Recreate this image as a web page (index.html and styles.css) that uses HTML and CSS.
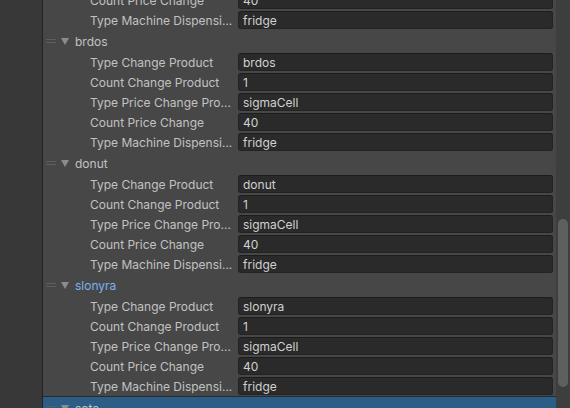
FILE: index.html
```html
<!DOCTYPE html>
<html>
<head>
<meta charset="utf-8">
<link rel="stylesheet" href="styles.css">
</head>
<body>
<div class="window">
  <div class="side"></div>
  <div class="main">
    <div class="list">
      <div class="row"><span class="label">Count Price Change</span><span class="field">40</span></div>
      <div class="row"><span class="label">Type Machine Dispensi...</span><span class="field">fridge</span></div>

      <div class="head"><span class="handle"></span><span class="tri"></span><span class="name">brdos</span></div>
      <div class="row"><span class="label">Type Change Product</span><span class="field">brdos</span></div>
      <div class="row"><span class="label">Count Change Product</span><span class="field">1</span></div>
      <div class="row"><span class="label">Type Price Change Pro...</span><span class="field">sigmaCell</span></div>
      <div class="row"><span class="label">Count Price Change</span><span class="field">40</span></div>
      <div class="row"><span class="label">Type Machine Dispensi...</span><span class="field">fridge</span></div>

      <div class="head"><span class="handle"></span><span class="tri"></span><span class="name">donut</span></div>
      <div class="row"><span class="label">Type Change Product</span><span class="field">donut</span></div>
      <div class="row"><span class="label">Count Change Product</span><span class="field">1</span></div>
      <div class="row"><span class="label">Type Price Change Pro...</span><span class="field">sigmaCell</span></div>
      <div class="row"><span class="label">Count Price Change</span><span class="field">40</span></div>
      <div class="row"><span class="label">Type Machine Dispensi...</span><span class="field">fridge</span></div>

      <div class="head"><span class="handle"></span><span class="tri"></span><span class="name name-active">slonyra</span></div>
      <div class="row"><span class="label">Type Change Product</span><span class="field">slonyra</span></div>
      <div class="row"><span class="label">Count Change Product</span><span class="field">1</span></div>
      <div class="row"><span class="label">Type Price Change Pro...</span><span class="field">sigmaCell</span></div>
      <div class="row"><span class="label">Count Price Change</span><span class="field">40</span></div>
      <div class="row"><span class="label">Type Machine Dispensi...</span><span class="field">fridge</span></div>

      <div class="head head-selected"><span class="handle"></span><span class="tri"></span><span class="name">sota</span></div>
    </div>
  </div>
  <div class="scrollbar"><div class="thumb"></div></div>
</div>
</body>
</html>
```
FILE: styles.css
```css
html, body {
  margin: 0;
  padding: 0;
  height: 100%;
  overflow: hidden;
  background: #383838;
  font-family: Inter, "Noto Sans", sans-serif;
  font-size: 12px;
}

.window {
  display: flex;
  height: 408px;
  overflow: hidden;
}

.side {
  width: 42px;
  flex: none;
  background: #383838;
  border-right: 1px solid #232323;
}

.main {
  width: 513px;
  flex: none;
  background: #474747;
  overflow: hidden;
}

.list {
  margin-top: -10px;
  display: flex;
  flex-direction: column;
}

.row {
  height: 20px;
  display: flex;
  align-items: center;
  padding-left: 47px;
  padding-right: 3px;
}

.label {
  width: 148px;
  flex: none;
  color: #c2c2c2;
  white-space: nowrap;
  overflow: hidden;
  padding-top: 1px;
}

.field {
  flex: 1;
  height: 18px;
  box-sizing: border-box;
  background: #2a2a2a;
  border: 1px solid #232323;
  border-top-color: #1c1c1c;
  border-radius: 3px;
  color: #d0d0d0;
  padding-left: 4px;
  line-height: 17px;
}

.head {
  height: 22px;
  display: flex;
  align-items: center;
  padding-left: 3px;
}

.head-selected {
  background: #2c5d87;
  border-top: 1px solid #2a2a2a;
}

.handle {
  width: 10px;
  height: 4px;
  box-sizing: border-box;
  border-top: 1px solid #5e5e5e;
  border-bottom: 1px solid #5e5e5e;
  margin-right: 5px;
  margin-top: -1px;
}

.tri {
  width: 0;
  height: 0;
  border-left: 4px solid transparent;
  border-right: 4px solid transparent;
  border-top: 7px solid #8c8c8c;
  margin-right: 6px;
}

.name {
  color: #c2c2c2;
  padding-top: 1px;
}

.name-active {
  color: #7bb1ee;
}

.scrollbar {
  width: 14px;
  flex: none;
  background: #3e3e3e;
  padding-top: 219px;
  box-sizing: border-box;
}

.thumb {
  width: 10px;
  height: 168px;
  margin-left: 2px;
  border-radius: 5px;
  background: #5f5f5f;
}
```
